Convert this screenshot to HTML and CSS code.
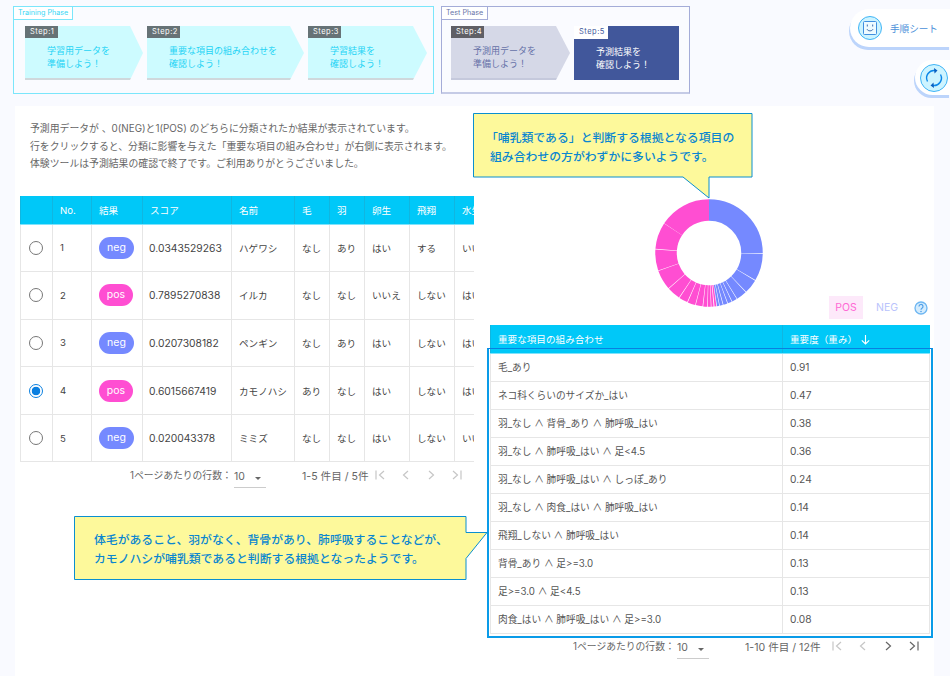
FILE: index.html
```html
<!DOCTYPE html>
<html lang="ja">
<head>
<meta charset="utf-8">
<title>予測結果</title>
<link rel="stylesheet" href="styles.css">
</head>
<body>
<header class="phases">
  <section class="phase phase-train">
    <div class="phase-label">Training Phase</div>
    <div class="steps">
      <div class="step step-1"><span class="step-tag">Step:1</span><p>学習用データを<br>準備しよう！</p></div>
      <div class="step step-2"><span class="step-tag">Step:2</span><p>重要な項目の組み合わせを<br>確認しよう！</p></div>
      <div class="step step-3"><span class="step-tag">Step:3</span><p>学習結果を<br>確認しよう！</p></div>
    </div>
  </section>
  <section class="phase phase-test">
    <div class="phase-label">Test Phase</div>
    <div class="steps">
      <div class="step step-4"><span class="step-tag">Step:4</span><p>予測用データを<br>準備しよう！</p></div>
      <div class="step step-5"><span class="step-tag">Step:5</span><p>予測結果を<br>確認しよう！</p></div>
    </div>
  </section>
</header>

<button class="float float-sheet">
  <span class="float-icon">
    <svg width="24" height="24" viewBox="0 0 24 24"><circle cx="12" cy="12" r="11.5" fill="#cdf4ff" stroke="#3fb4f5"/><rect x="5.5" y="5.5" width="13" height="13" rx="1" fill="#eefbff" stroke="#3f8fe0"/><path d="M9.3 8.5v2M14.7 8.5v2M9 13.2c1 2.2 5 2.2 6 0" fill="none" stroke="#3f6fb0" stroke-width="1"/></svg>
  </span>
  <span>手順シート</span>
</button>
<button class="float float-reload">
  <svg width="28" height="28" viewBox="0 0 28 28"><circle cx="14" cy="14" r="13.5" fill="#cdf4ff" stroke="#3fb4f5"/><path d="M7.5 17.5A7.5 7.5 0 0 1 15.5 6.6M20.5 10.5A7.5 7.5 0 0 1 12.5 21.4" fill="none" stroke="#0a86e8" stroke-width="1.4"/><path d="M14 4l3.5 2.6L14.500 9.500zM14 24l-3.500-2.600 3-2.900z" fill="#0a5fc0"/></svg>
</button>

<main class="card">
  <div class="col-left">
    <div class="intro">
      <p>予測用データが 、0(NEG)と1(POS) のどちらに分類されたか結果が表示されています。</p>
      <p>行をクリックすると、分類に影響を与えた「重要な項目の組み合わせ」が右側に表示されます。</p>
      <p>体験ツールは予測結果の確認で終了です。ご利用ありがとうございました。</p>
    </div>
    <div class="table-wrap">
      <table class="data-table animals">
        <colgroup>
          <col class="c-radio"><col class="c-no"><col class="c-result"><col class="c-score"><col class="c-name"><col class="c-a"><col class="c-a"><col class="c-b"><col class="c-b"><col class="c-c">
        </colgroup>
        <thead>
          <tr><th></th><th>No.</th><th>結果</th><th>スコア</th><th>名前</th><th>毛</th><th>羽</th><th>卵生</th><th>飛翔</th><th>水生</th></tr>
        </thead>
        <tbody>
          <tr><td><span class="radio"></span></td><td>1</td><td><span class="badge neg">neg</span></td><td>0.0343529263</td><td>ハゲワシ</td><td>なし</td><td>あり</td><td>はい</td><td>する</td><td>いいえ</td></tr>
          <tr><td><span class="radio"></span></td><td>2</td><td><span class="badge pos">pos</span></td><td>0.7895270838</td><td>イルカ</td><td>なし</td><td>なし</td><td>いいえ</td><td>しない</td><td>はい</td></tr>
          <tr><td><span class="radio"></span></td><td>3</td><td><span class="badge neg">neg</span></td><td>0.0207308182</td><td>ペンギン</td><td>なし</td><td>あり</td><td>はい</td><td>しない</td><td>はい</td></tr>
          <tr><td><span class="radio on"></span></td><td>4</td><td><span class="badge pos">pos</span></td><td>0.6015667419</td><td>カモノハシ</td><td>あり</td><td>なし</td><td>はい</td><td>しない</td><td>はい</td></tr>
          <tr><td><span class="radio"></span></td><td>5</td><td><span class="badge neg">neg</span></td><td>0.020043378</td><td>ミミズ</td><td>なし</td><td>なし</td><td>はい</td><td>しない</td><td>いいえ</td></tr>
        </tbody>
      </table>
    </div>
    <div class="pager pager-left">
      <span class="pager-label">1ページあたりの行数：</span>
      <span class="pager-select">10<i class="caret"></i></span>
      <span class="pager-range">1-5 件目 / 5件</span>
      <span class="pager-icons">
        <svg width="12" height="12" viewBox="0 0 12 12"><path d="M2 1.500v9M10 2L5.500 6l4.500 4" fill="none" stroke="#c6c6c6" stroke-width="1.200"/></svg>
        <svg width="12" height="12" viewBox="0 0 12 12"><path d="M8 2L3.500 6 8 10" fill="none" stroke="#c6c6c6" stroke-width="1.200"/></svg>
        <svg width="12" height="12" viewBox="0 0 12 12"><path d="M4 2l4.500 4L4 10" fill="none" stroke="#c6c6c6" stroke-width="1.200"/></svg>
        <svg width="12" height="12" viewBox="0 0 12 12"><path d="M10 1.500v9M2 2l4.500 4L2 10" fill="none" stroke="#c6c6c6" stroke-width="1.200"/></svg>
      </span>
    </div>
  </div>

  <div class="col-right">
    <div class="chart-row">
      <svg class="donut" width="108" height="108" viewBox="0 0 108 108">
        <g fill="none" stroke-width="21.500" transform="rotate(-90 54 54)">
          <circle cx="54" cy="54" r="43" pathLength="360" stroke="#7589ff" stroke-dasharray="90.300 360" stroke-dashoffset="0"/>
          <circle cx="54" cy="54" r="43" pathLength="360" stroke="#7589ff" stroke-dasharray="29.300 360" stroke-dashoffset="-91"/>
          <circle cx="54" cy="54" r="43" pathLength="360" stroke="#7589ff" stroke-dasharray="15.300 360" stroke-dashoffset="-121"/>
          <circle cx="54" cy="54" r="43" pathLength="360" stroke="#7589ff" stroke-dasharray="11.300 360" stroke-dashoffset="-137"/>
          <circle cx="54" cy="54" r="43" pathLength="360" stroke="#7589ff" stroke-dasharray="5.300 360" stroke-dashoffset="-149"/>
          <circle cx="54" cy="54" r="43" pathLength="360" stroke="#7589ff" stroke-dasharray="4.300 360" stroke-dashoffset="-155"/>
          <circle cx="54" cy="54" r="43" pathLength="360" stroke="#7589ff" stroke-dasharray="4.300 360" stroke-dashoffset="-160"/>
          <circle cx="54" cy="54" r="43" pathLength="360" stroke="#7589ff" stroke-dasharray="3.300 360" stroke-dashoffset="-165"/>
          <circle cx="54" cy="54" r="43" pathLength="360" stroke="#7589ff" stroke-dasharray="2.300 360" stroke-dashoffset="-169"/>
          <circle cx="54" cy="54" r="43" pathLength="360" stroke="#ff4ed2" stroke-dasharray="2 360" stroke-dashoffset="-172"/>
          <circle cx="54" cy="54" r="43" pathLength="360" stroke="#ff4ed2" stroke-dasharray="2.300 360" stroke-dashoffset="-175"/>
          <circle cx="54" cy="54" r="43" pathLength="360" stroke="#ff4ed2" stroke-dasharray="3.300 360" stroke-dashoffset="-178"/>
          <circle cx="54" cy="54" r="43" pathLength="360" stroke="#ff4ed2" stroke-dasharray="4.300 360" stroke-dashoffset="-182"/>
          <circle cx="54" cy="54" r="43" pathLength="360" stroke="#ff4ed2" stroke-dasharray="7.300 360" stroke-dashoffset="-187"/>
          <circle cx="54" cy="54" r="43" pathLength="360" stroke="#ff4ed2" stroke-dasharray="8.300 360" stroke-dashoffset="-195"/>
          <circle cx="54" cy="54" r="43" pathLength="360" stroke="#ff4ed2" stroke-dasharray="9.300 360" stroke-dashoffset="-204"/>
          <circle cx="54" cy="54" r="43" pathLength="360" stroke="#ff4ed2" stroke-dasharray="14.300 360" stroke-dashoffset="-214"/>
          <circle cx="54" cy="54" r="43" pathLength="360" stroke="#ff4ed2" stroke-dasharray="21.300 360" stroke-dashoffset="-229"/>
          <circle cx="54" cy="54" r="43" pathLength="360" stroke="#ff4ed2" stroke-dasharray="22.800 360" stroke-dashoffset="-251"/>
          <circle cx="54" cy="54" r="43" pathLength="360" stroke="#ff4ed2" stroke-dasharray="28.800 360" stroke-dashoffset="-274.500"/>
          <circle cx="54" cy="54" r="43" pathLength="360" stroke="#ff4ed2" stroke-dasharray="56.500 360" stroke-dashoffset="-303.500"/>
        </g>
      </svg>
      <div class="legend">
        <span class="legend-pos">POS</span>
        <span class="legend-neg">NEG</span>
        <svg class="legend-help" width="14" height="14" viewBox="0 0 14 14"><circle cx="7" cy="7" r="6" fill="#d4ecfd" stroke="#6db6f2" stroke-width="1.300"/><path d="M5 5.500a2 2 0 1 1 3 1.700c-.8.500-1 .8-1 1.600" fill="none" stroke="#4f9fe8" stroke-width="1.200"/><circle cx="7" cy="10.500" r=".8" fill="#4f9fe8"/></svg>
      </div>
    </div>
    <table class="data-table rules">
      <colgroup><col class="c-rule"><col class="c-weight"></colgroup>
      <thead>
        <tr><th>重要な項目の組み合わせ</th><th>重要度（重み）<svg class="sort" width="11" height="11" viewBox="0 0 11 11"><path d="M5.500 1v9M1.800 6.300l3.700 3.700 3.700-3.700" fill="none" stroke="#fff" stroke-width="1.100"/></svg></th></tr>
      </thead>
      <tbody>
        <tr><td>毛_あり</td><td>0.91</td></tr>
        <tr><td>ネコ科くらいのサイズか_はい</td><td>0.47</td></tr>
        <tr><td>羽_なし ∧ 背骨_あり ∧ 肺呼吸_はい</td><td>0.38</td></tr>
        <tr><td>羽_なし ∧ 肺呼吸_はい ∧ 足&lt;4.5</td><td>0.36</td></tr>
        <tr><td>羽_なし ∧ 肺呼吸_はい ∧ しっぽ_あり</td><td>0.24</td></tr>
        <tr><td>羽_なし ∧ 肉食_はい ∧ 肺呼吸_はい</td><td>0.14</td></tr>
        <tr><td>飛翔_しない ∧ 肺呼吸_はい</td><td>0.14</td></tr>
        <tr><td>背骨_あり ∧ 足&gt;=3.0</td><td>0.13</td></tr>
        <tr><td>足&gt;=3.0 ∧ 足&lt;4.5</td><td>0.13</td></tr>
        <tr><td>肉食_はい ∧ 肺呼吸_はい ∧ 足&gt;=3.0</td><td>0.08</td></tr>
      </tbody>
    </table>
    <div class="pager pager-right">
      <span class="pager-label">1ページあたりの行数：</span>
      <span class="pager-select">10<i class="caret"></i></span>
      <span class="pager-range">1-10 件目 / 12件</span>
      <span class="pager-icons">
        <svg width="12" height="12" viewBox="0 0 12 12"><path d="M2 1.500v9M10 2L5.500 6l4.500 4" fill="none" stroke="#c6c6c6" stroke-width="1.200"/></svg>
        <svg width="12" height="12" viewBox="0 0 12 12"><path d="M8 2L3.500 6 8 10" fill="none" stroke="#c6c6c6" stroke-width="1.200"/></svg>
        <svg width="12" height="12" viewBox="0 0 12 12"><path d="M4 2l4.500 4L4 10" fill="none" stroke="#666" stroke-width="1.200"/></svg>
        <svg width="12" height="12" viewBox="0 0 12 12"><path d="M10 1.500v9M2 2l4.500 4L2 10" fill="none" stroke="#666" stroke-width="1.200"/></svg>
      </span>
    </div>
  </div>

  <div class="highlight"></div>

  <div class="callout callout-top">
    <svg class="callout-shape" width="281" height="87" viewBox="0 0 281 87"><path d="M.5.500h278.500v63.500h-43v21l-26-21H.5z" fill="#fdf99b" stroke="#0a8fd0"/></svg>
    <p><span class="bracket">「</span>哺乳類である」と判断する根拠となる項目の<br>組み合わせの方がわずかに多いようです。</p>
  </div>
  <div class="callout callout-left">
    <svg class="callout-shape" width="414" height="64" viewBox="0 0 414 64"><path d="M.5.500h391.500v16h21l-21 26v21H.5z" fill="#fdf99b" stroke="#0a8fd0"/></svg>
    <p>体毛があること、羽がなく、背骨があり、肺呼吸することなどが、<br>カモノハシが哺乳類であると判断する根拠となったようです。</p>
  </div>
</main>
</body>
</html>
```

FILE: styles.css
```css
* { box-sizing: border-box; }
html, body { margin: 0; padding: 0; }
body {
  width: 950px;
  height: 676px;
  overflow: hidden;
  position: relative;
  background: #f9faff;
  font-family: Inter, "Noto Sans CJK JP", sans-serif;
  color: #444;
}
p { margin: 0; }

/* phases */
.phases { display: flex; gap: 7px; padding: 6px 0 0 13px; height: 106px; }
.phase { position: relative; height: 88px; border: 1px solid; padding: 19px 9px 0 11px; background: #fafbff; }
.phase-train { width: 421px; border-color: #7be6fb; }
.phase-test { width: 249px; border-color: #a4acd8; border-bottom: 2px solid #c5cbe6; padding-left: 9px; }
.phase-label {
  position: absolute; left: -1px; top: -1px; height: 14px; padding: 0 4px;
  border: 1px solid; background: #fff; font-size: 7.200px; line-height: 12px; white-space: nowrap;
}
.phase-train .phase-label { color: #37d6f5; border-color: #7be6fb; }
.phase-test .phase-label { color: #6a75a8; border-color: #a4acd8; }
.steps { display: flex; gap: 4px; }
.step { height: 54px; flex: none; position: relative; }
.step p { font-size: 9px; line-height: 13px; padding-top: 6px; white-space: nowrap; }
.step-tag {
  display: block; width: 33px; height: 12px; background: #667276; color: #fff;
  font-size: 7.500px; line-height: 12px; padding-left: 5px; letter-spacing: .5px;
}
.step-1, .step-2, .step-3 { background: linear-gradient(to top, #cfd8dc 2px, #cdfbff 2px); color: #1fd3f5; }
.step-1 { width: 118px; clip-path: polygon(0 0, 105px 0, 100% 50%, 105px 100%, 0 100%); }
.step-1 p { padding-left: 22px; }
.step-2 { width: 157px; clip-path: polygon(0 0, 143px 0, 100% 50%, 143px 100%, 0 100%); }
.step-2 p { padding-left: 22px; }
.step-3 { width: 119px; clip-path: polygon(0 0, 105px 0, 100% 50%, 105px 100%, 0 100%); }
.step-3 p { padding-left: 22px; }
.step-4 { width: 119px; background: linear-gradient(to top, #c5c9dc 2px, #d5d8e7 2px); color: #6671a8; clip-path: polygon(0 0, 105px 0, 100% 50%, 105px 100%, 0 100%); }
.step-4 p { padding-left: 22px; }
.step-4 .step-tag { background: #5f5f66; }
.step-5 { width: 105px; background: #41579b; color: #fff; }
.step-5 p { padding-left: 22px; padding-top: 6px; }
.step-5 .step-tag { background: #fff; color: #41579b; width: 34px; height: 13px; }

/* floating buttons */
.float {
  position: absolute; right: 0; display: flex; align-items: center; border: 0; padding: 0;
  background: #fff; border-radius: 22px 0 0 22px; box-shadow: -1px 3px 0 #bcd4fb;
  font-family: inherit;
}
.float-sheet { top: 9px; width: 100px; height: 38px; padding-left: 8px; gap: 8px; font-size: 9.600px; color: #4a90d9; }
.float-sheet .float-icon { display: flex; }
.float-reload { top: 60px; width: 35px; height: 35px; padding-left: 5px; }

/* card */
.card { position: relative; display: flex; margin-left: 15px; width: 919px; height: 570px; background: #fff; }
.col-left { width: 459px; flex: none; }
.col-right { width: 460px; flex: none; padding: 93px 0 0 16px; }

.intro { padding: 14px 0 0 15px; height: 90px; font-size: 9.860px; line-height: 17.700px; color: #666; white-space: nowrap; }

.table-wrap { margin-left: 5px; width: 454px; overflow: hidden; }
.data-table { border-collapse: collapse; table-layout: fixed; font-size: 9.600px; }
.data-table th { background: #00c8f8; color: #fff; font-weight: 400; text-align: left; padding: 1px 7px 0; height: 28px; border-left: 1px solid #10b6e0; border-bottom: 1px solid #7fe3fb; white-space: nowrap; }
.data-table td { border: 1px solid #e6e6e6; padding: 0 7px; white-space: nowrap; overflow: hidden; }
.animals { width: 500px; }
.animals td { height: 47.600px; }
.animals td:nth-child(4) { font-size: 10.300px; padding-left: 6px; }
.c-radio { width: 32px; } .c-no { width: 39px; } .c-result { width: 51px; } .c-score { width: 89px; }
.c-name { width: 63px; } .c-a { width: 35px; } .c-b { width: 45px; } .c-c { width: 66px; }

.radio { display: block; width: 14px; height: 14px; margin-left: 1px; border-radius: 50%; border: 1.400px solid #777; }
.radio.on { border-color: #0a7fe0; background: radial-gradient(circle, #0a7fe0 0 4px, #fff 4.600px); }
.badge { display: block; width: 35px; height: 22px; border-radius: 11px; color: #fff; font-size: 10.500px; line-height: 21px; text-align: center; }
.badge.neg { background: #7589ff; }
.badge.pos { background: #ff4ed2; width: 34px; }

.pager { display: flex; align-items: flex-start; font-size: 9.800px; color: #666; white-space: nowrap; }
.pager-left { padding: 6px 0 0 115px; }
.pager-label { width: 104px; }
.pager-select { position: relative; display: block; width: 32px; height: 20px; padding-top: 2px; font-size: 10.500px; border-bottom: 1px solid #ccc; }
.caret { position: absolute; right: 5px; top: 9px; border: 3.500px solid transparent; border-top-color: #666; border-bottom: 0; }
.pager-range { margin-left: 36px; width: 72px; font-size: 10.600px; }
.pager-icons { display: flex; gap: 13.500px; padding-top: 1px; }
.pager-right { padding: 5px 0 0 83px; }
.pager-right .pager-range { width: 86px; }

/* chart */
.chart-row { display: flex; justify-content: space-between; height: 120px; padding-left: 165px; margin-bottom: 6px; width: 439px; }
.donut { flex: none; }
.legend { display: flex; align-items: center; align-self: flex-end; height: 23px; font-size: 10.500px; }
.legend-pos { display: block; width: 34px; height: 23px; margin-right: 13px; background: #fde9fa; color: #ff6ad5; line-height: 23px; text-align: center; }
.legend-neg { color: #b9c3fc; width: 22px; margin-right: 16px; }
.legend-help { margin-right: 1px; }

/* rule table */
.rules { width: 439px; }
.c-rule { width: 292px; } .c-weight { width: 147px; }
.rules td { height: 28px; color: #555; font-size: 9.700px; }
.rules td:last-child { font-size: 10.200px; }
.rules th { font-size: 9.600px; vertical-align: bottom; padding-bottom: 7px; }
.sort { vertical-align: -2px; margin-left: 3px; }

/* overlays */
.highlight { position: absolute; left: 472px; top: 242px; width: 446px; height: 290px; border: 2px solid #0a9be8; border-top: 1px solid #0a7fe0; pointer-events: none; }
.callout { position: absolute; color: #0a86d0; font-size: 11.850px; line-height: 19px; font-weight: 500; white-space: nowrap; }
.callout-shape { position: absolute; left: 0; top: 0; }
.callout p { position: relative; }
.bracket { margin-left: -4px; }
.callout-top { left: 458px; top: 7px; width: 281px; height: 87px; padding: 16px 0 0 17px; }
.callout-left { left: 59px; top: 410px; width: 414px; height: 64px; padding: 15px 0 0 20px; }
```
